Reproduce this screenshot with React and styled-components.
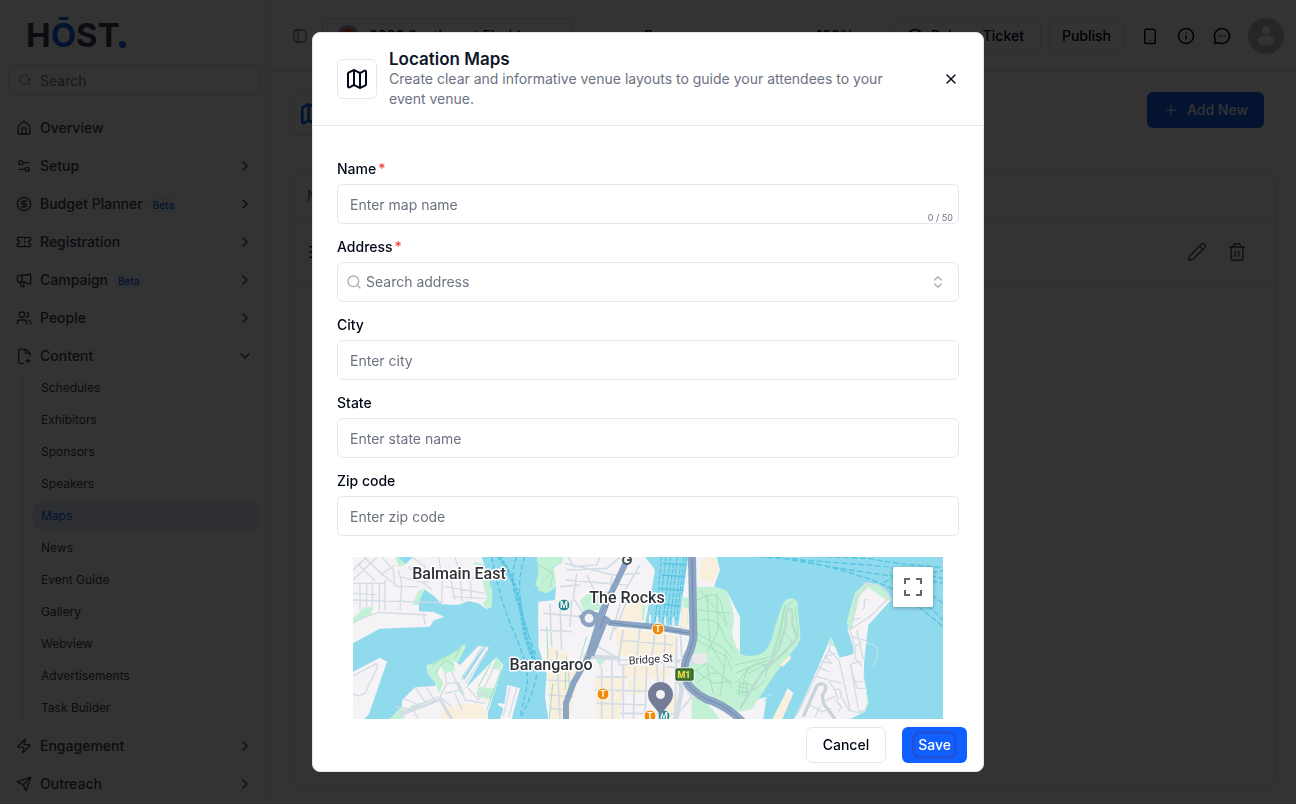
import React from 'react';
import styled, { createGlobalStyle } from 'styled-components';
import {
  House, Settings2, CircleDollarSign, Ticket, Users, Zap, Send,
  Search, ChevronRight, ChevronDown, ChevronsUpDown, PanelLeft, Info,
  MessageCircleMore, Plus, Pencil, Trash2, Map as MapIcon, X, Menu, LifeBuoy,
} from 'lucide-react';

const GlobalStyle = createGlobalStyle`
  *, *::before, *::after { box-sizing: border-box; }
  body {
    margin: 0;
    overflow: hidden;
    background: #fff;
    color: #020817;
    font-family: Inter, "Liberation Sans", sans-serif;
    font-size: 14px;
    line-height: 20px;
  }
  button, input { font: inherit; color: inherit; }
  button { cursor: pointer; }
  a { color: inherit; text-decoration: none; }
  svg { display: block; flex: none; }
  h1, p, ul { margin: 0; padding: 0; }
  ul { list-style: none; }
`;

/* ---------- page shell ---------- */

const Page = styled.div`
  display: flex;
  height: 100vh;
  overflow: hidden;
`;

const Sidebar = styled.aside`
  width: 270px;
  flex: none;
  padding: 0 8px;
  border-right: 1px solid #e5e7eb;
  overflow: hidden;
`;

const Logo = styled.a`
  display: block;
  padding: 8px 0 0 16px;
  height: 64px;
`;

const SearchBox = styled.label`
  display: flex;
  align-items: center;
  gap: 8px;
  height: 32px;
  margin-bottom: 16px;
  padding: 0 9px;
  border: 1px solid #e5e7eb;
  border-radius: 6px;
  color: #6b7280;

  input {
    flex: 1;
    min-width: 0;
    padding: 1px 0 0;
    border: 0;
    outline: 0;
    background: none;
  }
  input::placeholder { color: #6b7280; opacity: 1; }
`;

const NavList = styled.ul`
  display: flex;
  flex-direction: column;
  gap: 6px;
`;

const NavLink = styled.a`
  display: flex;
  align-items: center;
  gap: 8px;
  height: 32px;
  padding: 0 8px;
  color: #374151;
  font-weight: 500;

  > svg:last-child:not(:first-child) { margin-left: auto; }
`;

const Beta = styled.span`
  margin: 2px 0 0 -2px;
  padding: 0 4px;
  border-radius: 8px;
  background: #eff6ff;
  color: #155eef;
  font-size: 10px;
  line-height: 16px;
`;

const SubList = styled.ul`
  margin: 0 0 0 14px;
  padding: 2px 0 2px 10px;
  border-left: 1px solid #e5e7eb;
  display: flex;
  flex-direction: column;
  gap: 4px;
`;

const SubLink = styled.a`
  display: block;
  height: 28px;
  padding: 0 8px;
  border-radius: 6px;
  font-size: 12px;
  line-height: 28px;
  color: ${(p) => (p.$active ? '#155eef' : '#374151')};
  background: ${(p) => (p.$active ? '#e0eaff' : 'transparent')};
`;

const Main = styled.div`
  flex: 1;
  min-width: 0;
  display: flex;
  flex-direction: column;
`;

const TopBar = styled.header`
  display: flex;
  align-items: center;
  height: 72px;
  flex: none;
  padding: 0 12px 0 22px;
  border-bottom: 1px solid #e5e7eb;
`;

const IconButton = styled.button`
  display: grid;
  place-items: center;
  width: ${(p) => p.$size || 36}px;
  height: 36px;
  padding: 0;
  border: 0;
  background: none;
  color: ${(p) => p.$tone || '#020817'};
`;

const EventPicker = styled.button`
  display: flex;
  align-items: center;
  gap: 10px;
  width: 250px;
  height: 36px;
  margin-left: 14px;
  padding: 0 14px;
  border: 1px solid #d9dbe1;
  border-radius: 6px;
  background: none;
  font-weight: 500;
`;

const EventBadge = styled.span`
  width: 22px;
  height: 22px;
  border: 3px solid #aab0d0;
  border-radius: 50%;
  background: #e2553b;
`;

const Progress = styled.div`
  flex: 1;
  display: flex;
  justify-content: space-between;
  padding: 0 36px 0 72px;
  font-weight: 500;
`;

const OutlineButton = styled.button`
  display: flex;
  align-items: center;
  justify-content: center;
  gap: 8px;
  height: 36px;
  margin-right: 8px;
  padding: 0 ${(p) => (p.$wide ? 16 : 12)}px;
  border: 1px solid #e5e7eb;
  border-radius: 6px;
  background: #fff;
  font-weight: 500;
  white-space: nowrap;
`;

const Avatar = styled.div`
  margin-left: 8px;
`;

const Content = styled.main`
  flex: 1;
  display: flex;
  flex-direction: column;
  gap: 36px;
  padding: 20px 20px 18px;
`;

const TitleRow = styled.div`
  display: flex;
  align-items: flex-start;
  justify-content: space-between;
  padding-right: 12px;
`;

const PageIcon = styled.div`
  display: grid;
  place-items: center;
  width: 44px;
  height: 44px;
  border: 1px solid #e5e7eb;
  border-radius: 6px;
  color: #155eef;
`;

const AddButton = styled.button`
  display: flex;
  align-items: center;
  gap: 8px;
  height: 36px;
  padding: 0 16px;
  border: 0;
  border-radius: 6px;
  background: #155eef;
  color: #fff;
  font-weight: 500;
`;

const Card = styled.section`
  flex: 1;
  border: 1px solid #e5e7eb;
  border-radius: 8px;
`;

const Table = styled.table`
  width: 100%;
  border-collapse: collapse;

  th, td {
    padding: 0 16px;
    border-bottom: 1px solid #e5e7eb;
    text-align: left;
  }
  th { height: 46px; color: #6b7280; font-weight: 500; }
  td { height: 65px; }
`;

const RowActions = styled.div`
  display: flex;
  justify-content: flex-end;
  gap: 4px;
  padding-right: 4px;
`;

/* ---------- dialog ---------- */

const Overlay = styled.div`
  position: fixed;
  inset: 0;
  display: grid;
  justify-items: center;
  padding: 32px 0;
  background: rgba(0, 0, 0, 0.8);
`;

const Dialog = styled.div`
  display: flex;
  flex-direction: column;
  width: 100%;
  max-width: 672px;
  min-height: 0;
  border: 1px solid #e5e7eb;
  border-radius: 8px;
  background: #fff;
  overflow: hidden;
`;

const DialogHeader = styled.header`
  display: flex;
  align-items: center;
  gap: 12px;
  padding: 16px 14px 16px 24px;
  border-bottom: 1px solid #e5e7eb;
`;

const DialogIcon = styled.div`
  display: grid;
  place-items: center;
  width: 40px;
  height: 40px;
  flex: none;
  border: 1px solid #e5e7eb;
  border-radius: 6px;
`;

const DialogHeading = styled.div`
  flex: 1;
  min-width: 0;

  h1 {
    font-size: 17px;
    line-height: 20px;
    font-weight: 600;
    color: #0f172a;
  }
  p { max-width: 510px; color: #6b7280; }
`;

const DialogBody = styled.form`
  flex: 1;
  min-height: 0;
  display: flex;
  flex-direction: column;
  gap: 12px;
  padding: 32px 24px 0;
  overflow-y: auto;
  scrollbar-width: none;
`;

const Field = styled.div`
  display: flex;
  flex-direction: column;
  gap: 4px;
`;

const FieldLabel = styled.label`
  font-weight: 500;
  line-height: 22px;

  span { margin-left: 2px; color: #ef4444; }
`;

const Control = styled.div`
  position: relative;
  display: flex;
  align-items: center;
  gap: 4px;
  height: 40px;
  padding: 0 ${(p) => (p.$icons ? 12 : 4)}px 0 ${(p) => (p.$icons ? 8 : 12)}px;
  border: 1px solid #e5e7eb;
  border-radius: 6px;
  color: #a9adb5;

  input {
    flex: 1;
    min-width: 0;
    padding: ${(p) => (p.$icons ? 0 : 2)}px 0 0;
    border: 0;
    outline: 0;
    background: none;
    color: #020817;
  }
  input::placeholder { color: #6b7280; opacity: 1; }
`;

const Counter = styled.small`
  position: absolute;
  right: 5px;
  bottom: 0;
  color: #6b7280;
  font-size: 9px;
  line-height: 11px;
`;

const MapPanel = styled.div`
  position: relative;
  flex: none;
  height: 162px;
  margin: 9px 16px 0;
  background: #90daee;
  overflow: hidden;
`;

const FullscreenButton = styled.button`
  position: absolute;
  top: 10px;
  right: 10px;
  display: grid;
  place-items: center;
  width: 40px;
  height: 40px;
  padding: 0;
  border: 0;
  border-radius: 2px;
  background: #fff;
  box-shadow: 0 1px 4px rgba(0, 0, 0, 0.3);
`;

const DialogFooter = styled.footer`
  display: flex;
  justify-content: flex-end;
  gap: 16px;
  padding: 8px 16px;
`;

const CancelButton = styled.button`
  height: 36px;
  padding: 0 16px;
  border: 1px solid #e5e7eb;
  border-radius: 6px;
  background: #fff;
  font-weight: 500;
`;

const SaveButton = styled.button`
  height: 36px;
  padding: 0 10px;
  border: 0;
  border-radius: 6px;
  background: #1060ff;
  color: #fff;
  font-weight: 500;

  span {
    display: block;
    padding: 1px 3px;
    border: 3px solid #1c52dc;
    border-radius: 8px;
  }
`;

/* ---------- map drawing ---------- */

const road = { fill: 'none', stroke: '#d3dce4', strokeWidth: 4, strokeLinejoin: 'round' };
const path = { fill: 'none', stroke: '#a3dfbd', strokeWidth: 3 };
const ferry = { fill: 'none', stroke: '#56c4e2', strokeWidth: 4, strokeDasharray: '16 8' };
const highway = { fill: 'none', stroke: '#8ba4c2', strokeLinejoin: 'round' };
const LAND = '#f5f3f5';
const PARK = '#c3f1d5';
const BEIGE = '#f8efdd';

function WestShore() {
  return (
    <g transform="translate(-8 -7) scale(.33333)">
      <path fill={LAND} d="M24 20H155L182 42L205 20H410L428 80L442 130L438 172L425 178L400 160L370 153L340 165L290 163L270 140L238 118L222 150V184L265 186L298 200L265 212L255 230L104 236L24 280Z" />
      <path fill={PARK} d="M385 35L412 40L430 90L442 120L440 168L425 178L415 163L425 140L408 80ZM205 155L222 120L240 118L225 148L222 165L200 165ZM24 205L60 172L85 172L76 195L24 222ZM150 22L162 50L182 44L162 22Z" />
      <path {...road} d="M24 100H120M24 150L290 158M24 130L95 134M65 100V170M82 100V170M103 100V180M120 90V180M45 100V180M24 90L98 20M24 60L66 20M38 42L90 92M58 22L110 72L150 45M110 72L160 110H220M110 20L145 60L150 110M160 60L170 100L165 180M165 80L235 98L280 72M190 50L215 75M200 20L240 50L250 98M280 20L292 85L290 160M235 98L260 118M292 85L340 72L400 90M300 110L420 130M318 90L330 150M345 75L352 155M375 85L380 150M320 140L420 145M330 22L345 72M24 215L100 187L245 195M235 190L240 222" />
      <path fill={LAND} d="M24 365L105 323L126 335L72 492L58 507H24ZM135 507L170 470L172 450L210 412L270 408L285 330L320 325L345 345L400 288L432 292L362 415L440 335L455 322L475 345L428 490L430 507ZM487 405L525 415L500 507H465L475 475L458 465L462 458L478 462Z" />
      <path fill="#90daee" d="M350 380L418 290L422 292L358 390Z" />
      <path fill={PARK} d="M243 345L265 340L285 327L320 312L358 282L362 292L340 335L325 332L330 362L300 370L285 345L278 370L295 400L282 430L268 395L248 372ZM290 350L325 338L328 360L300 370ZM335 408L348 405L360 435L345 430ZM400 410L450 415L440 450L395 440ZM455 320L472 345L462 360L440 355ZM135 507L168 475L182 490L175 507ZM195 468L225 458L232 470L200 480Z" />
      <path fill={BEIGE} d="M290 507V480L345 460L380 462L400 455L425 485V507Z" />
      <path {...road} d="M24 432L40 438L60 430L98 350L95 340L24 378M175 445L220 465M210 412L240 455M245 411L270 455M300 370L305 400L285 440L320 470M305 400L340 398L360 450L420 460M320 365L345 420M330 430L350 480M300 430L345 420M370 415L400 450L450 345M395 430L440 440M160 490L280 440M150 470L205 480L220 507M350 390L410 292M362 400L427 300M495 410L475 500M515 415L492 500" />
      <path {...road} strokeWidth="9" d="M165 495L285 448L320 507" />
      <path {...path} d="M262 345L345 295L330 325M270 370L300 330L328 345M438 340L400 410M470 355L425 480" />
      <path {...ferry} strokeWidth="10" strokeDasharray="12 3" d="M462 20Q515 90 530 195T580 350" />
      <path {...ferry} d="M440 20Q465 150 500 230T545 355L548 400L525 500M515 20Q490 90 520 165T572 340M540 20Q510 100 535 200T590 345M575 375Q568 420 530 500" />
      <path fill={PARK} d="M575 20H600V130L570 105L582 70Z" />
      <path fill={LAND} d="M610 155H598Q580 165 580 205L590 290L610 295Z" />
    </g>
  );
}

function CityCentre() {
  return (
    <g transform="translate(187 -7) scale(.33333)">
      <path fill={LAND} d="M70 20H315L345 60L315 225L415 228L445 20H530L540 60L522 110L560 122L600 200V507H25L15 440L20 370L-5 290L-5 155L45 150L48 110L20 70L60 40Z" />
      <path fill={PARK} d="M-5 20H70L65 42L40 50L48 95L45 115L20 130L-5 122ZM120 150L150 128L205 145L190 180H130ZM470 110L522 110L560 122Q590 195 578 235Q572 275 610 322V507H590L455 420L440 395L450 320L468 290ZM430 140L450 145L440 235H420ZM300 130L318 135L312 210H280ZM165 325L205 320L180 350ZM320 300L338 295L335 315ZM455 440L490 445L540 507H455Z" />
      <path fill={BEIGE} d="M488 22L530 25L535 65L520 100L475 90ZM270 125L310 130L305 212H240L260 170ZM430 170L445 175L438 235L420 230ZM225 235L410 255L405 325L350 315L235 320ZM20 290L80 310L115 380L90 507H30ZM165 380L250 385L240 507H170ZM240 345L390 350L385 385H250ZM265 390L320 385L315 430L265 435ZM380 430L415 440L410 507H350Z" />
      <path fill="#ece7ea" d="M460 310H502V340L450 342Z" />
      <path {...road} strokeWidth="5" d="M75 40L220 75L300 70M80 60L200 55L240 22M85 20L100 50L170 45L180 22M110 70L100 145L130 190M140 75L165 125L220 130M75 90L260 105M60 110L120 105M215 80L210 150M300 45L250 130L210 270M270 130L225 240M10 190L120 200M0 240L95 245M30 160L35 290M60 155L65 300M95 150L90 230M25 330L130 350M20 390L110 395M25 435L100 440M30 475L80 480M50 300L60 507M85 340L88 420M150 275L240 330H460M250 240L235 330L240 345L420 335M300 230L290 330M345 245L335 330M375 255L370 400M240 270L400 285M170 380L260 382M165 420L370 425M170 460L320 465M185 350L185 507M215 330L218 507M250 345L250 507M285 350L280 507M320 350L315 507M350 340L355 410M410 260L405 507M380 350L420 355M420 230L425 320M240 490L420 492M425 320L470 345M420 390L455 440L400 507" />
      <path {...road} strokeWidth="14" d="M130 318L240 325M415 380L425 420L408 507" />
      <path {...path} d="M470 150Q530 120 540 150T560 230M475 180L570 190M475 210Q530 200 545 240T590 310M470 250L545 290L600 350M470 270L560 320L590 400M500 130L510 280L550 350M530 130L535 240L500 310M480 120L560 220M455 370L500 340L600 420M470 400Q520 350 550 380T600 460M450 350L520 400L600 390M500 345L520 430M560 300L540 440M-5 45L40 70L30 115M5 100L40 60M25 350L20 230M38 400L28 507M80 320L75 420M140 260L120 330" />
      <path fill="none" stroke="#4fc0df" strokeWidth="3" strokeDasharray="14 4" d="M365 20L345 215M378 20L355 215M392 20L368 220M400 40L378 220M412 20L390 220M422 40L400 220M432 20L410 215M440 20L425 130" />
      <path fill="none" stroke="#55c5e2" strokeWidth="4" d="M370 40L440 44M365 75L435 80M358 115L430 122M350 160L422 168" />
      <path fill="none" stroke="#f1eff1" strokeWidth="6" d="M330 195V222M352 200V225M376 202V226M400 202V228" />
      <path {...highway} strokeWidth="18" d="M265 22L228 100L188 180L145 320L100 400L78 460V507" />
      <path {...highway} strokeWidth="26" d="M192 210L150 315" />
      <path {...highway} strokeWidth="18" d="M120 205Q170 180 210 218L340 230L455 250" />
      <path fill="none" stroke="#6f8cb2" strokeWidth="3" d="M210 218L455 250M222 118L180 235" />
      <circle cx="147" cy="205" r="20" fill="#f5f3f5" stroke="#8ba4c2" strokeWidth="13" />
    </g>
  );
}

function EastShore() {
  return (
    <g transform="translate(382 -7) scale(.33333)">
      <path fill={LAND} d="M-10 470L95 440L85 507H-10Z" />
      <path fill={PARK} d="M-8 300Q40 330 80 310Q105 300 120 230L140 170Q150 143 170 145Q190 148 188 170L196 250Q198 275 180 295L120 372L85 425L50 478L15 485L-8 475Z" />
      <path fill={BEIGE} d="M135 345L165 315L168 325L145 350ZM112 507L152 428L172 438L142 507Z" />
      <path fill={LAND} d="M158 415L176 430L168 442L150 430Z" />
      <path {...path} d="M150 165L135 240L110 320L0 345M175 155L150 170L130 280M180 170L190 260L120 330L40 370M135 230L175 280M128 280L90 380M0 370L100 330M0 400L60 340M0 430Q60 430 90 390M40 350L25 390L60 420M10 398L45 404M8 410L42 416M6 422L40 428M15 395L12 440M25 395L22 440M35 398L32 440M60 335L100 350L60 400" />
      <path {...road} stroke="#b8dcd0" strokeWidth="7" d="M160 172Q150 190 152 230L130 300L70 385L15 475M162 172Q176 180 172 220L186 265L150 305L95 355" />
      <path {...road} stroke="#b5e5e6" d="M95 440L88 455M95 437L112 432M395 277L428 292L425 330L415 350" />
      <path fill={LAND} d="M177 507L200 460L250 350L288 262L300 290L314 323L355 312L355 290L338 240L345 180L360 130L395 97L435 108L470 148L400 225L388 330L386 380L400 460L390 485L345 507Z" />
      <path fill={PARK} d="M340 240L335 215L360 130L395 97L435 108L470 148L455 152L400 112L375 135L355 215L345 240ZM288 262L300 290L282 285ZM386 350L392 400L401 460L390 482L396 450ZM370 480L390 485L372 495Z" />
      <path {...road} d="M385 100H400L365 140L358 180L348 240M400 103Q440 95 465 140L405 200L345 238M385 180Q390 165 388 155Q390 145 400 150M350 210L375 205M345 240L360 290V325L382 350M348 260L395 272M365 240L385 330M380 275L360 290M290 270L282 300L312 330L328 400L345 480Q370 495 392 478M282 300L185 495M300 310L270 320L290 340L258 335M350 340L378 335M348 340L355 395L370 475M358 395H385M345 345L366 415H390M250 350L280 365M245 380L320 400M275 385L300 420L310 450M300 420Q320 410 318 440L345 485M265 455L300 440M225 465L260 485L290 475M300 450L320 470L310 485M240 500L255 470" />
      <path {...road} stroke="#c8d3da" strokeWidth="10" d="M205 500L245 408Q258 395 272 408Q275 418 262 435L265 460L300 507" />
      <path {...ferry} strokeWidth="4" strokeDasharray="18 7" d="M70 20Q230 32 360 42T470 55L625 85M120 20Q300 55 430 72L630 100M170 25Q330 60 410 90L505 130M250 20L400 25Q500 45 625 52M445 98L470 85L520 80L625 62M550 170L625 230M560 150L625 210M590 135L625 160" />
    </g>
  );
}

function Motorway() {
  return (
    <g transform="translate(187 -7) scale(.33333)">
      <path {...highway} strokeWidth="24" d="M456 20L460 240Q465 275 440 325Q425 365 445 405Q480 445 520 455Q570 475 612 520" />
      <path fill="none" stroke="#6f8cb2" strokeWidth="3" d="M456 20L460 240Q465 275 440 325Q425 365 445 405Q480 445 520 455Q570 475 612 520" />
    </g>
  );
}

function Marker({ x, y, color, letter }) {
  return (
    <g>
      <circle cx={x} cy={y} r="6" fill={color} stroke="#fff" />
      <text x={x} y={y + 3} textAnchor="middle" fill="#fff" fontSize="9" fontWeight="700">{letter}</text>
    </g>
  );
}

function VenueMap() {
  return (
    <svg width="590" height="162" viewBox="0 0 590 162" fontFamily="Roboto, sans-serif" role="img" aria-label="Map of central Sydney">
      <WestShore />
      <CityCentre />
      <EastShore />
      <Motorway />
      <circle cx="274" cy="3" r="4" fill="#fff" stroke="#49505a" strokeWidth="2" />
      <path d="M274 3h4" stroke="#49505a" strokeWidth="2" />
      <Marker x={211} y={48} color="#1f8a8f" letter="M" />
      <Marker x={305} y={72} color="#f28b0c" letter="T" />
      <Marker x={250} y={137} color="#f28b0c" letter="T" />
      <Marker x={297} y={159} color="#f28b0c" letter="T" />
      <Marker x={311} y={159} color="#1f8a8f" letter="M" />
      <rect x="322" y="111" width="19" height="13" rx="2" fill="#3f7b35" stroke="#fff" />
      <rect x="323" y="112" width="17" height="11" rx="1" fill="none" stroke="#2f5c27" />
      <text x="331" y="121" textAnchor="middle" fontSize="9" fontWeight="700" fill="#ffe14d">M1</text>
      <path fill="#747c98" d="M307.500 125a12.500 12.500 0 0 1 12.500 12.500c0 9-9 13-12.500 22c-3.500-9-12.500-13-12.500-22a12.500 12.500 0 0 1 12.500-12.500Z" />
      <circle cx="307.500" cy="137.500" r="4.500" fill="#f5f3f5" />
      <g fill="#2f3338" stroke="#fff" strokeWidth="3" strokeLinejoin="round" paintOrder="stroke" textAnchor="middle" fontWeight="500" fontSize="16">
        <text x="106" y="22">Balmain East</text>
        <text x="274" y="46">The Rocks</text>
        <text x="198" y="113">Barangaroo</text>
        <text x="298" y="106" fontSize="11" fontWeight="400" transform="rotate(-4 298 106)">Bridge St</text>
      </g>
    </svg>
  );
}

/* ---------- small drawings ---------- */

function HostLogo() {
  return (
    <svg width="110" height="48" viewBox="0 0 110 48" role="img" aria-label="Host">
      <text x="2" y="39" fontFamily="Inter, sans-serif" fontSize="33" fontWeight="700" fill="#374151">
        H<tspan fill="#155eef">Ō</tspan>ST
      </text>
      <circle cx="98.500" cy="36.500" r="3.500" fill="#155eef" />
    </svg>
  );
}

const lineIcon = {
  viewBox: '0 0 24 24',
  fill: 'none',
  stroke: 'currentColor',
  strokeLinecap: 'round',
  strokeLinejoin: 'round',
};

function TabletIcon() {
  return (
    <svg width="18" height="18" {...lineIcon} strokeWidth="2">
      <rect x="5" y="3" width="14" height="19" rx="2" />
      <path d="M12 18h.01" />
    </svg>
  );
}

function MegaphoneIcon({ size, strokeWidth }) {
  return (
    <svg width={size} height={size} {...lineIcon} strokeWidth={strokeWidth}>
      <path d="M9 5H4a2 2 0 0 0-2 2v6a2 2 0 0 0 2 2h5Z" />
      <path d="M9 5c5 0 9-1 12-2q1 0 1 1v13q0 1-1 1c-3-1-7-3-12-3" />
      <path d="M6 15l1.500 6q.5 1 1.500 1h2q1.500 0 1-1.500L11 15.500" />
    </svg>
  );
}

function FileAddIcon({ size, strokeWidth }) {
  return (
    <svg width={size} height={size} {...lineIcon} strokeWidth={strokeWidth}>
      <path d="M11 23H6a2 2 0 0 1-2-2V4a2 2 0 0 1 2-2h9l6 6v4" />
      <path d="M14 2v4a2 2 0 0 0 2 2h5M18 16v6M15 19h6" />
    </svg>
  );
}

function UserAvatar() {
  return (
    <svg width="36" height="36" viewBox="0 0 36 36" aria-hidden="true">
      <circle cx="18" cy="18" r="18" fill="#bfbfbf" />
      <circle cx="18" cy="12" r="4" fill="#fff" />
      <ellipse cx="18" cy="22.500" rx="8" ry="5" fill="#fff" />
    </svg>
  );
}

function FullscreenIcon() {
  return (
    <svg width="18" height="18" viewBox="0 0 18 18" fill="#666" aria-hidden="true">
      <path d="M0 0v6h2V2h4V0H0zm16 0h-4v2h4v4h2V0h-2zm0 16h-4v2h6v-6h-2v4zM2 12H0v6h6v-2H2v-4z" />
    </svg>
  );
}

/* ---------- screen ---------- */

const NAV = [
  { label: 'Overview', icon: House, leaf: true },
  { label: 'Setup', icon: Settings2 },
  { label: 'Budget Planner', icon: CircleDollarSign, beta: true },
  { label: 'Registration', icon: Ticket },
  { label: 'Campaign', icon: MegaphoneIcon, beta: true },
  { label: 'People', icon: Users },
  {
    label: 'Content',
    icon: FileAddIcon,
    children: ['Schedules', 'Exhibitors', 'Sponsors', 'Speakers', 'Maps', 'News', 'Event Guide', 'Gallery', 'Webview', 'Advertisements', 'Task Builder'],
  },
  { label: 'Engagement', icon: Zap },
  { label: 'Outreach', icon: Send },
];

function NavItem({ item }) {
  const Icon = item.icon;
  const Chevron = item.children ? ChevronDown : ChevronRight;
  return (
    <li>
      <NavLink href="#">
        <Icon size={16} strokeWidth={2} />
        <span>{item.label}</span>
        {item.beta && <Beta>Beta</Beta>}
        {!item.leaf && <Chevron size={16} strokeWidth={2} />}
      </NavLink>
      {item.children && (
        <SubList>
          {item.children.map((name) => (
            <li key={name}><SubLink href="#" $active={name === 'Maps'}>{name}</SubLink></li>
          ))}
        </SubList>
      )}
    </li>
  );
}

function TextField({ id, label, placeholder, required, counter, search }) {
  return (
    <Field>
      <FieldLabel htmlFor={id}>{label}{required && <span>*</span>}</FieldLabel>
      <Control $icons={search}>
        {search && <Search size={16} strokeWidth={2} />}
        <input id={id} type="text" placeholder={placeholder} />
        {search && <ChevronsUpDown size={16} strokeWidth={2} />}
        {counter && <Counter>{counter}</Counter>}
      </Control>
    </Field>
  );
}

export default function App() {
  return (
    <>
      <GlobalStyle />
      <Page>
        <Sidebar>
          <Logo href="#"><HostLogo /></Logo>
          <SearchBox>
            <Search size={14} strokeWidth={1.5} />
            <input type="search" placeholder="Search" aria-label="Search" />
          </SearchBox>
          <nav>
            <NavList>{NAV.map((item) => <NavItem key={item.label} item={item} />)}</NavList>
          </nav>
        </Sidebar>
        <Main>
          <TopBar>
            <IconButton $size={16} $tone="#374151" aria-label="Toggle sidebar"><PanelLeft size={16} strokeWidth={1.5} /></IconButton>
            <EventPicker><EventBadge />2026 Southwest Florida</EventPicker>
            <Progress><span>Progress</span><span>100%</span></Progress>
            <OutlineButton $wide><LifeBuoy size={16} />Raise a Ticket</OutlineButton>
            <OutlineButton>Publish</OutlineButton>
            <IconButton aria-label="Mobile preview"><TabletIcon /></IconButton>
            <IconButton aria-label="Information"><Info size={18} /></IconButton>
            <IconButton aria-label="Messages"><MessageCircleMore size={18} /></IconButton>
            <Avatar><UserAvatar /></Avatar>
          </TopBar>
          <Content>
            <TitleRow>
              <PageIcon><MapIcon size={26} strokeWidth={2.5} /></PageIcon>
              <AddButton><Plus size={16} strokeWidth={1.5} />Add New</AddButton>
            </TitleRow>
            <Card>
              <Table>
                <thead><tr><th>Name</th><th aria-label="Actions" /></tr></thead>
                <tbody>
                  <tr>
                    <td><Menu size={18} /></td>
                    <td>
                      <RowActions>
                        <IconButton $tone="#4b5563" aria-label="Edit"><Pencil size={20} strokeWidth={1.75} /></IconButton>
                        <IconButton $tone="#4b5563" aria-label="Delete"><Trash2 size={20} strokeWidth={1.75} /></IconButton>
                      </RowActions>
                    </td>
                  </tr>
                </tbody>
              </Table>
            </Card>
          </Content>
        </Main>
      </Page>

      <Overlay>
        <Dialog role="dialog" aria-modal="true" aria-labelledby="dialog-title">
          <DialogHeader>
            <DialogIcon><MapIcon size={24} strokeWidth={2} /></DialogIcon>
            <DialogHeading>
              <h1 id="dialog-title">Location Maps</h1>
              <p>Create clear and informative venue layouts to guide your attendees to your event venue.</p>
            </DialogHeading>
            <IconButton aria-label="Close"><X size={16} /></IconButton>
          </DialogHeader>
          <DialogBody id="map-form">
            <TextField id="name" label="Name" placeholder="Enter map name" required counter="0 / 50" />
            <TextField id="address" label="Address" placeholder="Search address" required search />
            <TextField id="city" label="City" placeholder="Enter city" />
            <TextField id="state" label="State" placeholder="Enter state name" />
            <TextField id="zip" label="Zip code" placeholder="Enter zip code" />
            <MapPanel>
              <VenueMap />
              <FullscreenButton type="button" aria-label="Toggle fullscreen view"><FullscreenIcon /></FullscreenButton>
            </MapPanel>
          </DialogBody>
          <DialogFooter>
            <CancelButton type="button">Cancel</CancelButton>
            <SaveButton type="button"><span>Save</span></SaveButton>
          </DialogFooter>
        </Dialog>
      </Overlay>
    </>
  );
}
